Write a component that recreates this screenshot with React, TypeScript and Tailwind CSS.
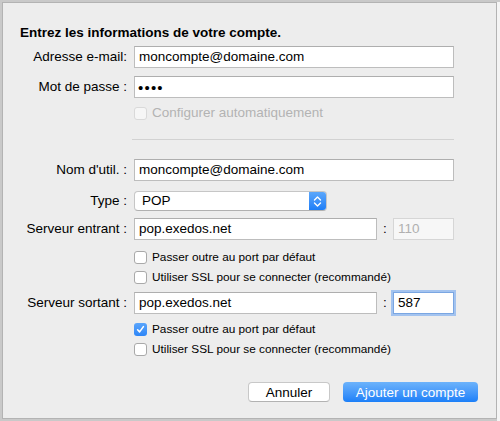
import React from 'react';

function Label({ children }: { children: React.ReactNode }) {
  return <div className="w-[124px] shrink-0 text-right whitespace-nowrap">{children}</div>;
}

function Field({ value, className = '' }: { value: string; className?: string }) {
  return (
    <div
      className={`h-[22px] bg-white border border-[#bdbdbd] border-t-[#aeaeae] pl-[4px] flex items-center whitespace-nowrap ${className}`}
    >
      {value}
    </div>
  );
}

function Check({
  checked = false,
  disabled = false,
  small = false,
  label,
}: {
  checked?: boolean;
  disabled?: boolean;
  small?: boolean;
  label: string;
}) {
  return (
    <div className="flex items-center h-[13px] ml-[131px]">
      {checked ? (
        <div className="w-[13px] h-[13px] rounded-[3px] bg-gradient-to-b from-[#5aa5fb] to-[#2d86f7] flex items-center justify-center">
          <svg width="9" height="9" viewBox="0 0 9 9">
            <path d="M1.6 4.8 L3.6 6.9 L7.4 1.6" fill="none" stroke="white" strokeWidth="1.6" strokeLinecap="round" strokeLinejoin="round" />
          </svg>
        </div>
      ) : (
        <div
          className={`w-[13px] h-[13px] rounded-[3px] border ${
            disabled ? 'border-[#d9d9d9] bg-[#f6f6f6]' : 'border-[#a9a9a9] bg-white'
          }`}
        />
      )}
      <span
        className={`ml-[5px] whitespace-nowrap ${small ? 'text-[11.8px]' : ''} ${
          disabled ? 'text-[#b3b3b3]' : 'text-black'
        }`}
      >
        {label}
      </span>
    </div>
  );
}

export default function App() {
  return (
    <div className="w-[500px] h-[421px] overflow-hidden flex bg-[#c9c9c9] font-['Liberation_Sans',Arial,sans-serif] text-[13.5px] text-black">
      <div className="w-[2px] shrink-0" />
      {/* sheet */}
      <div className="mt-[2px] w-[495px] h-[417px] shrink-0 bg-[#ededed] border border-[#b3b3b3] flex flex-col">
        <div className="pl-[17px] mt-[22px] h-[16px] leading-[16px] font-bold">
          Entrez les informations de votre compte.
        </div>

        {/* Compte */}
        <div className="flex items-center mt-[5px]">
          <Label>Adresse e-mail:</Label>
          <Field value="moncompte@domaine.com" className="ml-[7px] w-[320px]" />
        </div>
        <div className="flex items-center mt-[8px]">
          <Label>Mot de passe :</Label>
          <Field value="" className="ml-[7px] w-[320px]" />
          <span className="absolute ml-[135px] text-[15px] tracking-[1.2px] leading-none">••••</span>
        </div>
        <div className="mt-[9px]">
          <Check disabled label="Configurer automatiquement" />
        </div>

        <div className="ml-[129px] mt-[19px] w-[322px] h-px bg-[#d2d2d2]" />

        {/* Serveurs */}
        <div className="flex items-center mt-[19px]">
          <Label>Nom d'util. :</Label>
          <Field value="moncompte@domaine.com" className="ml-[7px] w-[320px]" />
        </div>
        <div className="flex items-center mt-[10px]">
          <Label>Type :</Label>
          <div className="ml-[7px] w-[193px] h-[20px] rounded-[4px] bg-white border border-[#c6c6c6] border-b-[#b0b0b0] flex items-center overflow-hidden">
            <span className="flex-1 pl-[7px]">POP</span>
            <div className="w-[17px] h-full bg-gradient-to-b from-[#5ba7fb] to-[#1c7ef7] flex items-center justify-center">
              <svg width="9" height="13" viewBox="0 0 9 13">
                <path d="M1.5 5 L4.5 2 L7.5 5 M1.5 8 L4.5 11 L7.5 8" fill="none" stroke="white" strokeWidth="1.4" strokeLinecap="round" strokeLinejoin="round" />
              </svg>
            </div>
          </div>
        </div>
        <div className="flex items-center mt-[7px]">
          <Label>Serveur entrant :</Label>
          <Field value="pop.exedos.net" className="ml-[7px] w-[243px]" />
          <span className="w-[16px] text-center">:</span>
          <div className="w-[61px] h-[22px] bg-[#f7f7f7] border border-[#d6d6d6] pl-[4px] flex items-center text-[#b0b0b0]">
            110
          </div>
        </div>
        <div className="mt-[11px]">
          <Check small label="Passer outre au port par défaut" />
        </div>
        <div className="mt-[7px]">
          <Check small label="Utiliser SSL pour se connecter (recommandé)" />
        </div>

        <div className="flex items-center mt-[8px]">
          <Label>Serveur sortant :</Label>
          <Field value="pop.exedos.net" className="ml-[7px] w-[243px]" />
          <span className="w-[16px] text-center">:</span>
          <div className="w-[61px] h-[22px] bg-white border border-[#7aa6e2] shadow-[0_0_0_2px_#a3c3ef] pl-[4px] flex items-center">
            587
          </div>
        </div>
        <div className="mt-[9px]">
          <Check small checked label="Passer outre au port par défaut" />
        </div>
        <div className="mt-[7px]">
          <Check small label="Utiliser SSL pour se connecter (recommandé)" />
        </div>

        {/* Boutons */}
        <div className="flex justify-end gap-[13px] pr-[18px] mt-[26px]">
          <button
            type="button"
            className="w-[82px] h-[20px] rounded-[4px] bg-white border border-[#c8c8c8] border-b-[#b2b2b2] leading-none"
          >
            Annuler
          </button>
          <button
            type="button"
            className="w-[135px] h-[20px] rounded-[4px] bg-gradient-to-b from-[#6cb3fb] to-[#1a7ff8] text-white leading-none"
          >
            Ajouter un compte
          </button>
        </div>
      </div>
      <div className="flex-1 mt-[2px] bg-[#f4f4f4]" />
    </div>
  );
}
